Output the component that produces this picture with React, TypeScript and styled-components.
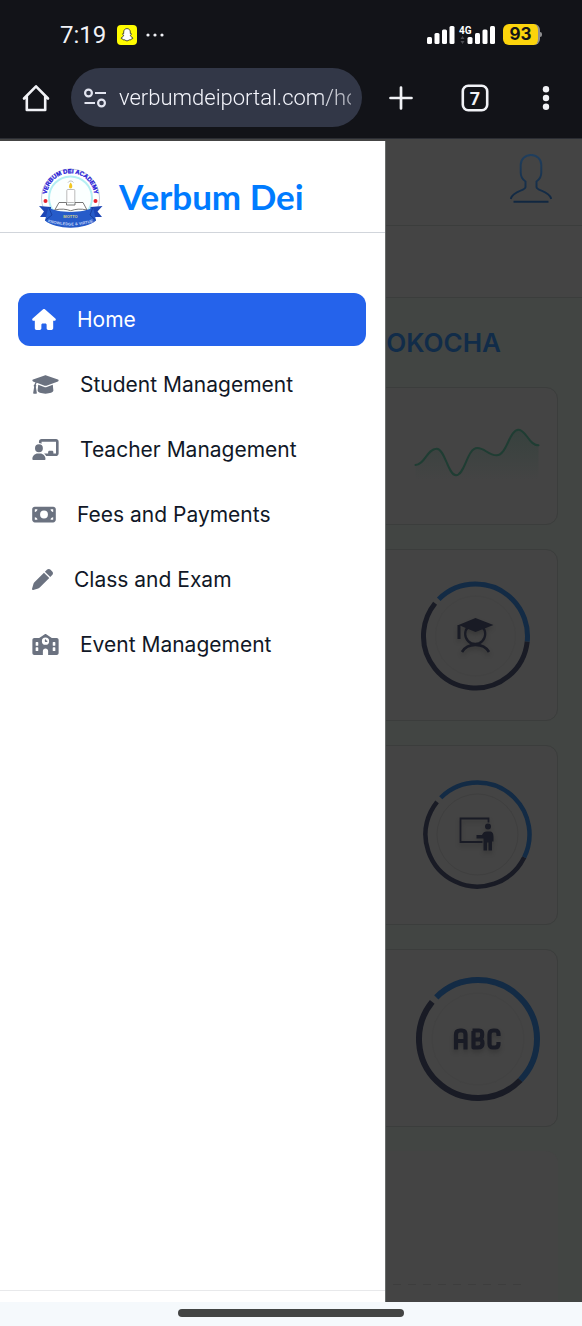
import React from "react";
import styled, { createGlobalStyle } from "styled-components";
import { FaHouse, FaChalkboardUser, FaMoneyBill, FaPen, FaSchool } from "react-icons/fa6";

const color = {
  chrome: "#121318",
  chromeText: "#f1f2f6",
  pill: "#323747",
  dimPanel: "#444444",
  dimPage: "#424543",
  dimLine: "#3b3d3c",
  dimBlue: "#132b45",
  dimNavy: "#191b25",
  dimGreen: "#1f3d33",
  brand: "#007bff",
  active: "#2563eb",
  text: "#111827",
  muted: "#6b7280",
};

const GlobalStyle = createGlobalStyle`
  *, *::before, *::after { box-sizing: border-box; }
  body { margin: 0; background: ${color.chrome}; font-family: Inter, "Liberation Sans", sans-serif; }
  button { border: 0; padding: 0; background: none; color: inherit; font: inherit; }
  svg { display: block; flex-shrink: 0; }
`;

const Screen = styled.div`
  display: flex;
  flex-direction: column;
  min-height: 100vh;
`;

/* Phone status bar and browser toolbar */

const StatusBar = styled.div`
  display: flex;
  align-items: center;
  height: 68px;
  padding: 1px 40px 0 60px;
  color: ${color.chromeText};
  background: ${color.chrome};
`;

const Clock = styled.time`
  margin-right: 11px;
  font: 400 24px/32px Roboto, sans-serif;
`;

const StatusEnd = styled.div`
  display: flex;
  align-items: center;
  gap: 7px;
  margin-left: auto;
`;

const Battery = styled.div`
  display: flex;
  align-items: center;
`;

const BatteryLevel = styled.span`
  width: 37px;
  height: 21px;
  border-right: 2px solid #8e8e90;
  border-radius: 6px;
  background: #fcd40c;
  color: #121318;
  font: 700 17px/21px Inter, sans-serif;
  text-align: center;
`;

const BatteryTip = styled.span`
  width: 2px;
  height: 5px;
  border-radius: 0 2px 2px 0;
  background: #8e8e90;
`;

const Toolbar = styled.div`
  display: grid;
  grid-template-columns: 71px minmax(0, 1fr) 78px 70px 72px;
  align-items: center;
  height: 71px;
  padding-bottom: 12px;
  border-bottom: 1px solid #2b2d33;
  background: ${color.chrome};
  color: ${color.chromeText};
`;

const ToolButton = styled.button`
  display: grid;
  place-items: center;
  height: 59px;
`;

const AddressBar = styled.label`
  display: flex;
  align-items: center;
  gap: 12px;
  height: 59px;
  padding: 0 11px 0 12px;
  border-radius: 30px;
  background: ${color.pill};
`;

const AddressInput = styled.input`
  flex: 1;
  min-width: 0;
  padding: 0;
  border: 0;
  outline: 0;
  background: none;
  color: #f4f5fc;
  font: 300 22px/32px Roboto, sans-serif;
  mask-image: linear-gradient(to right, #000 84%, rgba(0, 0, 0, 0.6) 100%);
`;

/* Dashboard behind the drawer */

const Stage = styled.div`
  position: relative;
  display: flex;
  flex: 1;
  flex-direction: column;
  background: ${color.dimPage};
`;

const TopBar = styled.header`
  display: flex;
  justify-content: flex-end;
  align-items: flex-start;
  height: 87px;
  padding: 15px 30px 0;
  border-bottom: 1px solid ${color.dimLine};
  background: ${color.dimPanel};
`;

const SubBar = styled.div`
  height: 72px;
  border-bottom: 1px solid ${color.dimLine};
  background: ${color.dimPanel};
`;

const Dashboard = styled.main`
  display: flex;
  flex: 1;
  flex-direction: column;
  gap: 24px;
  padding: 25px 24px 0;
`;

const UserName = styled.h1`
  margin: 0;
  padding-right: 57px;
  color: #112c49;
  font: 600 26px/40px Inter, sans-serif;
  text-align: right;
`;

const Card = styled.section<{ $height: number }>`
  display: flex;
  justify-content: flex-end;
  align-items: center;
  height: ${(p) => p.$height}px;
  padding-right: 17px;
  border: 1px solid ${color.dimLine};
  border-radius: 12px;
  background: ${color.dimPanel};
`;

const ChartPanel = styled.section`
  display: flex;
  flex: 1;
  align-items: flex-end;
  padding: 0 31px 17px 24px;
  border-radius: 12px 12px 0 0;
  background: ${color.dimPanel};
`;

const GridLine = styled.div`
  flex: 1;
  height: 1px;
  background: repeating-linear-gradient(to right, #3d3d3d 0 8px, transparent 8px 15px);
`;

/* Drawer */

const Drawer = styled.aside`
  position: absolute;
  top: 2px;
  bottom: 0;
  left: 0;
  display: flex;
  flex-direction: column;
  width: 66.3%;
  border-right: 1px solid #686b6a;
  background: #ffffff;
`;

const DrawerHeader = styled.div`
  display: flex;
  align-items: center;
  gap: 16px;
  height: 92px;
  padding: 22px 0 0 39px;
  border-bottom: 1px solid #d1d5db;
`;

const Brand = styled.span`
  padding-bottom: 4px;
  color: ${color.brand};
  font: 700 35px/48px Lato, sans-serif;
`;

const Menu = styled.nav`
  display: flex;
  flex: 1;
  flex-direction: column;
  gap: 12px;
  padding: 60px 19px 0 18px;
`;

const MenuLink = styled.a<{ $active?: boolean; $iconWidth: number }>`
  display: flex;
  align-items: center;
  gap: 21px;
  height: 53px;
  padding: 0 14px;
  border-radius: 12px;
  background: ${(p) => (p.$active ? color.active : "transparent")};
  color: ${(p) => (p.$active ? "#ffffff" : color.text)};
  font: 400 21px/32px Inter, sans-serif;
  text-decoration: none;
  white-space: nowrap;

  svg {
    width: ${(p) => p.$iconWidth}px;
    height: 21px;
    color: ${(p) => (p.$active ? "#ffffff" : color.muted)};
  }
`;

const DrawerFooter = styled.div`
  height: 12px;
  border-top: 1px solid #e8e9eb;
`;

const GestureBar = styled.footer`
  display: flex;
  justify-content: center;
  align-items: center;
  height: 24px;
  background: #f5f9fc;
`;

const GestureHandle = styled.span`
  width: 226px;
  height: 8px;
  margin-bottom: 2px;
  border-radius: 4px;
  background: #434544;
`;

function SnapIcon() {
  return (
    <svg width="20" height="20" viewBox="0 0 20 20" aria-hidden="true">
      <rect width="20" height="20" rx="4" fill="#fffc00" />
      <path
        d="M10 3.6c2 0 3.300 1.400 3.300 3.400v1.600c.5.2 1 0 1.200.3.2.5-.9.8-1.100 1.200-.1.9 1.200 2.400 2.600 2.900.1.6-1.100.8-1.700 1-.2.3-.1.8-.5.8-.6 0-1.200-.1-1.800.2-.6.4-1.100.9-2 .9s-1.400-.5-2-.9c-.6-.3-1.200-.2-1.800-.2-.4 0-.3-.5-.5-.8-.6-.2-1.800-.4-1.700-1 1.400-.5 2.700-2 2.600-2.900-.2-.4-1.300-.7-1.100-1.200.2-.3.7-.1 1.200-.3V7c0-2 1.300-3.400 3.300-3.400z"
        fill="#fff"
        stroke="#222"
        strokeWidth=".8"
      />
    </svg>
  );
}

const NoticeDots = styled.svg`
  margin-left: 9px;
`;

function SignalIcon() {
  return (
    <svg width="69" height="20" viewBox="0 0 69 20" aria-hidden="true">
      <g fill="#fff">
        <rect x="0" y="12" width="5" height="7" rx="1.500" />
        <rect x="7.500" y="8" width="5" height="11" rx="1.500" />
        <rect x="15" y="4.500" width="5" height="14.500" rx="1.500" />
        <rect x="22.500" y="1" width="5" height="18" rx="1.500" />
        <rect x="40.500" y="12" width="5" height="7" rx="1.500" />
        <rect x="48" y="8" width="5" height="11" rx="1.500" />
        <rect x="55.500" y="4.500" width="5" height="14.500" rx="1.500" />
        <rect x="63" y="1" width="5" height="18" rx="1.500" />
      </g>
      <text x="32" y="9" fontFamily="Roboto, sans-serif" fontWeight="700" fontSize="10" fill="#fff">
        4G
      </text>
      <path d="M33.500 14l2-3 2 3zM33.500 16l2 3 2-3z" fill="#4c4d52" />
    </svg>
  );
}

function ToolbarHomeIcon() {
  return (
    <svg width="28" height="28" viewBox="0 0 28 28" fill="none" aria-hidden="true">
      <path
        d="M2 14.500L14 2.300l12 12.200M4.800 12.500v13.500h18.400V12.500"
        stroke="currentColor"
        strokeWidth="2.600"
        strokeLinejoin="round"
        strokeLinecap="round"
      />
    </svg>
  );
}

function SiteInfoIcon() {
  return (
    <svg width="24" height="20" viewBox="0 0 24 20" fill="none" aria-hidden="true">
      <g stroke="#e3e5f0" strokeWidth="2.200">
        <circle cx="5.500" cy="5" r="3.400" />
        <path d="M12 5h11M1.500 15H12" />
        <circle cx="18.500" cy="15" r="3.400" />
      </g>
    </svg>
  );
}

function PlusIcon() {
  return (
    <svg width="24" height="24" viewBox="0 0 24 24" aria-hidden="true">
      <path d="M12 1.500v21M1.500 12h21" stroke="currentColor" strokeWidth="2.700" strokeLinecap="round" />
    </svg>
  );
}

function TabsIcon() {
  return (
    <svg width="28" height="28" viewBox="0 0 28 28" aria-hidden="true">
      <rect x="1.800" y="1.800" width="24.400" height="24.400" rx="5.500" fill="none" stroke="currentColor" strokeWidth="2.600" />
      <text x="14" y="20.500" textAnchor="middle" fontFamily="Roboto, sans-serif" fontWeight="700" fontSize="18" fill="currentColor">
        7
      </text>
    </svg>
  );
}

function MoreIcon() {
  return (
    <svg width="8" height="24" viewBox="0 0 8 24" fill="currentColor" aria-hidden="true">
      <circle cx="4" cy="3.200" r="3.200" />
      <circle cx="4" cy="12" r="3.200" />
      <circle cx="4" cy="20.800" r="3.200" />
    </svg>
  );
}

function ProfileIcon() {
  return (
    <svg width="42" height="50" viewBox="0 0 42 50" fill="none" aria-hidden="true">
      <defs>
        <linearGradient id="profile" x1="0" y1="0" x2="0" y2="50" gradientUnits="userSpaceOnUse">
          <stop offset="0" stopColor="#213f5d" />
          <stop offset="1" stopColor="#10263f" />
        </linearGradient>
      </defs>
      <path
        d="M.7 45C3 36.500 15.500 37 15.500 33v-5.500C12.500 25.500 10.700 22 10.700 18.500V11C10.700 5 15.200.9 21 .9S31.300 5 31.300 11v7.500c0 3.500-1.800 7-4.800 9V33c0 4 12.500 3.500 14.800 12M3.500 47.800h35"
        stroke="url(#profile)"
        strokeWidth="2"
      />
    </svg>
  );
}

function GraduationCapIcon() {
  return (
    <svg viewBox="0 0 640 512" fill="currentColor" aria-hidden="true">
      <path d="M623.1 136.9l-282.7-101.2c-13.73-4.91-28.7-4.91-42.43 0L16.05 136.9C6.438 140.4 0 149.6 0 160s6.438 19.65 16.05 23.09L76.07 204.6c-11.89 15.8-20.26 34.16-24.55 53.95C40.05 263.4 32 274.8 32 288c0 9.953 4.814 18.49 11.94 24.57l-24.83 149.1C17.48 471.1 25 480 34.89 480H93.11c9.887 0 17.41-8.879 15.78-18.33l-24.83-149.1C91.19 306.5 96 297.1 96 288c0-10.29-5.174-19.03-12.72-24.89c4.252-17.76 12.88-33.82 24.94-47.03l190.6 68.23c13.73 4.91 28.7 4.91 42.43 0l282.7-101.2C633.6 179.7 640 170.4 640 160S633.6 140.4 623.1 136.9zM351.1 314.4C341.7 318.5 330.9 320 320 320c-10.92 0-21.69-1.867-32-5.555L142.8 262.5L128 405.3C128 446.6 213.1 480 320 480c105.1 0 192-33.4 192-74.67l-14.78-142.9L351.1 314.4z" />
    </svg>
  );
}

function Sparkline() {
  const line =
    "M-.5 39C9 38.500 11 22.700 20.700 22.700C29 22.700 32 49.300 40 49.300C49 49.300 51 22 61.300 22C69 22 72 29.300 80.700 29.300C91 29.300 93 3.700 102.700 3.700C110 3.700 113 19.700 122.500 19.300";
  return (
    <svg width="124" height="60" viewBox="0 0 124 60" fill="none" overflow="visible" aria-hidden="true">
      <defs>
        <linearGradient id="area" x1="0" y1="0" x2="0" y2="1">
          <stop offset="0" stopColor={color.dimGreen} stopOpacity=".35" />
          <stop offset="1" stopColor={color.dimGreen} stopOpacity="0" />
        </linearGradient>
      </defs>
      <path d={`${line}V54H-.5Z`} fill="url(#area)" />
      <path d={line} stroke={color.dimGreen} strokeWidth="2" strokeLinecap="round" />
    </svg>
  );
}

interface RingProps {
  cx: number;
  cy: number;
  radius: number;
  stroke: number;
  end: number;
  inner: number;
  innerColor: string;
  children: React.ReactNode;
}

/* The blue arc runs from -135 degrees to `end`; the dark one from there to 219. */
function Ring({ cx, cy, radius, stroke, end, inner, innerColor, children }: RingProps) {
  return (
    <svg width="124" height="124" viewBox="0 0 124 124" fill="none" overflow="visible" aria-hidden="true">
      <g transform={`translate(${cx} ${cy})`}>
        <circle r={inner} stroke={innerColor} />
        <circle
          r={radius}
          stroke={color.dimNavy}
          strokeWidth={stroke}
          pathLength={360}
          strokeDasharray={`${219 - end} 360`}
          transform={`rotate(${end})`}
        />
        <circle
          r={radius}
          stroke={color.dimBlue}
          strokeWidth={stroke}
          pathLength={360}
          strokeDasharray={`${end + 135} 360`}
          transform="rotate(-135)"
        />
        {children}
      </g>
    </svg>
  );
}

const DrawingShadow = styled.g`
  filter: drop-shadow(0 3px 2px rgba(0, 0, 0, 0.18));
`;

function StudentGlyph() {
  return (
    <DrawingShadow>
      <circle cx="-.3" cy="-2" r="10" stroke={color.dimNavy} strokeWidth="2.300" />
      <path d="M-17-11L0-18l18 7L0-4z" fill={color.dimNavy} />
      <path d="M-16.500-11V3" stroke={color.dimNavy} strokeWidth="3" />
      <path d="M-13.500 16C-8 6.500 8 6.500 13.500 16" stroke={color.dimNavy} strokeWidth="2.600" />
    </DrawingShadow>
  );
}

function TeacherGlyph() {
  return (
    <DrawingShadow>
      <path d="M11-12v-4H-17V7.500H5" stroke={color.dimNavy} strokeWidth="1.800" />
      <circle cx="10.500" cy="-8" r="3" fill={color.dimNavy} />
      <path
        d="M-1 .5H4.500C5.500-2 7-3 9-3h3c3 0 4 2 4 5v5h-1.500v9h-3.500V8h-1.500v8H6V4H-1z"
        fill={color.dimNavy}
      />
    </DrawingShadow>
  );
}

function AbcGlyph() {
  return (
    <DrawingShadow>
      <g stroke={color.dimNavy} strokeWidth="4.200" strokeLinejoin="round">
        <path d="M-22 10.500V-4.500C-22-7-20.500-8.500-18-8.500H-16C-13.500-8.500-12.500-7-12.500-4.500V10.500M-22 2H-12.500" />
        <path d="M-5.500-8.500H1C4-8.500 4.200-7 4.200-4.500C4.200-1 3 .5 0 .5H-4H1C4 .5 4.500 2 4.500 4.500C4.500 7.500 3 8.500 0 8.500H-4.500V-8" />
        <path d="M20.500-3V-5C20.500-7.500 19-8.500 17-8.500H15C12.500-8.500 11.500-7 11.500-4.500V4.500C11.500 7.500 12.500 8.500 15 8.500H17C19 8.500 20.500 7.500 20.500 5V3" />
      </g>
    </DrawingShadow>
  );
}

function Emblem() {
  return (
    <svg width="64" height="60" viewBox="0 0 64 60" fill="none" aria-hidden="true">
      <defs>
        <path id="rim" d="M8 34A24 24 0 1 1 55 34" />
        <path id="motto" d="M9 54Q31.500 61 54 54" />
      </defs>
      <circle cx="31.500" cy="30" r="29" fill="#fff" stroke="#b9bfd0" strokeWidth=".8" />
      <circle cx="31.500" cy="30" r="21.500" fill="#fbffff" stroke="#b5eff3" strokeWidth="2" />
      <text
        fontFamily="Liberation Sans, sans-serif"
        fontWeight="700"
        fontSize="6"
        fill="#2417d6"
        stroke="#2417d6"
        strokeWidth=".3"
      >
        <textPath href="#rim" startOffset="50%" textAnchor="middle">
          VERBUM DEI ACADEMY
        </textPath>
      </text>
      <circle cx="6.500" cy="33" r="2" fill="#e6232d" />
      <circle cx="56.500" cy="33" r="2" fill="#e6232d" />
      <path d="M29 14.500c1.500-2 4-2 5.500 0" stroke="#a8a8a8" strokeWidth=".8" />
      <path d="M31.700 14.500c2.200 2.500 2 6-.1 6-2 0-2.200-3 .1-6z" fill="#f3c622" />
      <rect x="27.800" y="21.500" width="8" height="13" rx="1" fill="#fff" stroke="#aaa" strokeWidth=".8" />
      <path
        d="M20 34.500h7.500v2.500h8.500v-2.500H44l4 7.500c-6-1.500-12-1-16.200.8-4.300-1.800-10-2.300-16-.8z"
        fill="#fff"
        stroke="#555"
        strokeWidth=".8"
      />
      <path d="M0 38l12 1v10L1 49l4-5.500zM63.500 38l-12 1v10l11.500 0-4.500-5.500z" fill="#1d46b5" />
      <path d="M9.500 39c7.500 6.500 36.500 6.500 44.500 0l3 13.500C47 62 16 62 6 52.500z" fill="#265bc9" />
      <path d="M9.500 39L13 47l-7 5.500M54 39l-3 8 6 5.500" stroke="#12348c" strokeWidth=".7" />
      <text x="31.500" y="49.500" textAnchor="middle" fontFamily="Liberation Sans, sans-serif" fontWeight="700" fontSize="4" fill="#d8d58a">
        MOTTO
      </text>
      <text fontFamily="Liberation Sans, sans-serif" fontWeight="700" fontSize="4" fill="#c3d4f7">
        <textPath href="#motto" startOffset="50%" textAnchor="middle">
          KNOWLEDGE &amp; VIRTUE
        </textPath>
      </text>
    </svg>
  );
}

const menu: { label: string; icon: React.ElementType; iconWidth: number; active?: boolean }[] = [
  { label: "Home", icon: FaHouse, iconWidth: 24, active: true },
  { label: "Student Management", icon: GraduationCapIcon, iconWidth: 27 },
  { label: "Teacher Management", icon: FaChalkboardUser, iconWidth: 27 },
  { label: "Fees and Payments", icon: FaMoneyBill, iconWidth: 24 },
  { label: "Class and Exam", icon: FaPen, iconWidth: 21 },
  { label: "Event Management", icon: FaSchool, iconWidth: 27 },
];

export default function App() {
  return (
    <Screen>
      <GlobalStyle />
      <StatusBar>
        <Clock>7:19</Clock>
        <SnapIcon />
        <NoticeDots width="18" height="4" viewBox="0 0 18 4" fill="#f1f2f6" aria-hidden="true">
          <circle cx="2" cy="2" r="1.600" />
          <circle cx="9" cy="2" r="1.600" />
          <circle cx="16" cy="2" r="1.600" />
        </NoticeDots>
        <StatusEnd>
          <SignalIcon />
          <Battery>
            <BatteryLevel>93</BatteryLevel>
            <BatteryTip />
          </Battery>
        </StatusEnd>
      </StatusBar>
      <Toolbar>
        <ToolButton aria-label="Browser home">
          <ToolbarHomeIcon />
        </ToolButton>
        <AddressBar>
          <SiteInfoIcon />
          <AddressInput aria-label="Address" defaultValue="verbumdeiportal.com/home" />
        </AddressBar>
        <ToolButton aria-label="New tab">
          <PlusIcon />
        </ToolButton>
        <ToolButton aria-label="Switch tabs">
          <TabsIcon />
        </ToolButton>
        <ToolButton aria-label="More options">
          <MoreIcon />
        </ToolButton>
      </Toolbar>

      <Stage>
        <TopBar>
          <button aria-label="Profile">
            <ProfileIcon />
          </button>
        </TopBar>
        <SubBar />
        <Dashboard>
          <UserName>OKOCHA</UserName>
          <Card $height={138}>
            <Sparkline />
          </Card>
          <Card $height={172}>
            <Ring cx={59.5} cy={63} radius={52} stroke={5} end={6} inner={40} innerColor="#424242">
              <StudentGlyph />
            </Ring>
          </Card>
          <Card $height={180}>
            <Ring cx={61.5} cy={61.5} radius={52} stroke={4.5} end={26} inner={40.5} innerColor="#3f3f3f">
              <TeacherGlyph />
            </Ring>
          </Card>
          <Card $height={178}>
            <Ring cx={62} cy={63} radius={59} stroke={6} end={44} inner={46} innerColor="#424242">
              <AbcGlyph />
            </Ring>
          </Card>
          <ChartPanel>
            <GridLine />
          </ChartPanel>
        </Dashboard>

        <Drawer>
          <DrawerHeader>
            <Emblem />
            <Brand>Verbum Dei</Brand>
          </DrawerHeader>
          <Menu aria-label="Main">
            {menu.map(({ label, icon: Icon, iconWidth, active }) => (
              <MenuLink
                key={label}
                href="#"
                $active={active}
                $iconWidth={iconWidth}
                aria-current={active ? "page" : undefined}
              >
                <Icon aria-hidden="true" />
                {label}
              </MenuLink>
            ))}
          </Menu>
          <DrawerFooter />
        </Drawer>
      </Stage>
      <GestureBar>
        <GestureHandle />
      </GestureBar>
    </Screen>
  );
}
